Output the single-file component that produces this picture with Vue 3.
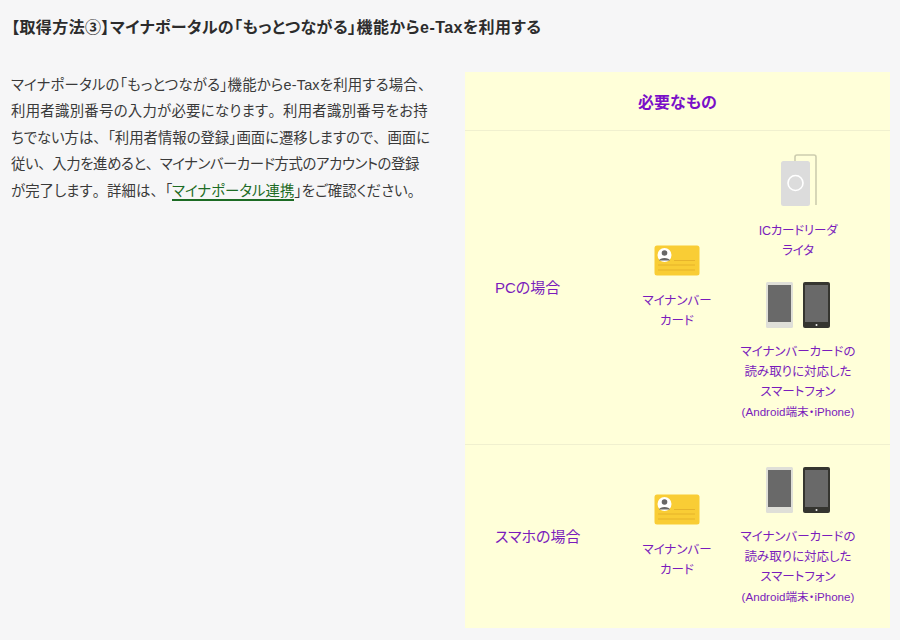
<script setup>
const phoneText = ['マイナンバーカードの', '読み取りに対応した', 'スマートフォン']
const rows = [
  { label: 'PCの場合', reader: true },
  { label: 'スマホの場合', reader: false },
]
</script>

<template>
  <main class="page">
    <h2 class="title">【取得方法③】マイナポータルの「もっとつながる」機能からe-Taxを利用する</h2>
    <div class="columns">
      <p class="lead">
        <span class="line l1">マイナポータルの「もっとつながる」機能からe-Taxを利用する場合<span class="p">、</span></span>
        <span class="line l2">利用者識別番号の入力が必要になります<span class="p">。</span>利用者識別番号をお持</span>
        <span class="line l3">ちでない方は<span class="p">、</span>「利用者情報の登録」画面に遷移しますので<span class="p">、</span>画面に</span>
        <span class="line l4">従い<span class="p">、</span>入力を進めると<span class="p">、</span>マイナンバーカード方式のアカウントの登録</span>
        <span class="line l5">が完了します<span class="p">。</span>詳細は<span class="p">、</span>「<a class="link" href="#">マイナポータル連携</a>」をご確認ください<span class="p">。</span></span>
      </p>
      <section class="panel">
        <h3 class="panel-title">必要なもの</h3>
        <div v-for="row in rows" :key="row.label" class="row">
          <div class="row-label">{{ row.label }}</div>
          <div class="card-col">
            <svg class="card-icon" viewBox="0 0 46 31" width="46" height="31">
              <rect x="0.5" y="0.5" width="45" height="30" rx="2.5" fill="#f9cd35" />
              <circle cx="10.5" cy="10" r="7" fill="#fff" />
              <circle cx="10.5" cy="8" r="2.8" fill="#666" />
              <path d="M5 15.5 C5.5 12 15.5 12 16 15.5 Z" fill="#666" />
              <path d="M20 15.5H41M4 20H41M4 25H41" stroke="#e6b32b" stroke-width="1" fill="none" />
            </svg>
            <div class="caption">マイナンバー<br>カード</div>
          </div>
          <div class="device-col">
            <template v-if="row.reader">
              <svg class="reader" viewBox="0 0 38 52" width="38" height="52">
                <path d="M15 8V3Q15 1 17 1H34Q36 1 36 3V51" fill="none" stroke="#cdcdae" stroke-width="1.6" />
                <rect x="1" y="7" width="29" height="45" rx="2.5" fill="#dcdcdc" />
                <circle cx="15.5" cy="29" r="7.5" fill="none" stroke="#fff" stroke-width="1.6" />
              </svg>
              <div class="caption reader-caption">ICカードリーダ<br>ライタ</div>
            </template>
            <div class="phones">
              <svg viewBox="0 0 27 46" width="27" height="46">
                <rect width="27" height="46" rx="1.5" fill="#dfdfd8" />
                <rect x="2" y="3" width="23" height="37" fill="#696969" />
              </svg>
              <svg viewBox="0 0 27 46" width="27" height="46">
                <rect width="27" height="46" rx="2" fill="#353530" />
                <rect x="2" y="3" width="23" height="37" fill="#696969" />
                <circle cx="13.5" cy="43" r="1" fill="#eee" />
              </svg>
            </div>
            <div class="caption phone-caption">
              <template v-for="line in phoneText" :key="line">{{ line }}<br></template>
              <span class="small">(Android端末・iPhone)</span>
            </div>
          </div>
        </div>
      </section>
    </div>
  </main>
</template>

<style scoped>
.page {
  width: 900px;
  height: 640px;
  box-sizing: border-box;
  padding: 18px 10px 0 11px;
  overflow: hidden;
  background: #f6f6f7;
  color: #333;
  font-family: "Liberation Sans", "Noto Sans CJK JP", sans-serif;
  font-feature-settings: "palt";
}
.title {
  margin: 0;
  font-size: 16px;
  line-height: 20px;
  font-weight: 700;
  letter-spacing: 0.42px;
  color: #2c2c2c;
}
.columns {
  display: flex;
  justify-content: space-between;
  align-items: flex-start;
  margin-top: 34px;
}
.lead {
  margin: 0;
  font-size: 14.4px;
  line-height: 26.4px;
  white-space: nowrap;
  color: #3a3a3a;
}
.line {
  display: block;
}
.p {
  font-feature-settings: normal;
}
.l1 { letter-spacing: 0.2px; }
.l2 { letter-spacing: 0.27px; }
.l3 { letter-spacing: -0.03px; }
.l4 { letter-spacing: -0.4px; }
.l5 { letter-spacing: 0.05px; }
.link {
  color: #1c6b24;
  text-decoration: none;
  border-bottom: 2px solid #1c6b24;
}
.panel {
  width: 425px;
  height: 556px;
  display: flex;
  flex-direction: column;
  background: #ffffd9;
  color: #7a1cbc;
}
.panel-title {
  margin: 0;
  height: 57px;
  padding-bottom: 1px;
  display: flex;
  align-items: center;
  justify-content: center;
  font-size: 16px;
  font-weight: 700;
  color: #7a0fc8;
  border-bottom: 1px solid #f0f0cf;
}
.row {
  display: grid;
  grid-template-columns: 140px 84px 158px;
  align-items: center;
  padding-left: 30px;
}
.row:nth-of-type(1) {
  height: 313px;
  border-bottom: 1px solid #f0f0cf;
}
.row:nth-of-type(2) {
  flex: 1;
}
.row-label {
  font-size: 15px;
  line-height: 20px;
}
.card-col,
.device-col {
  display: flex;
  flex-direction: column;
  align-items: center;
  text-align: center;
}
.card-icon {
  display: block;
}
.card-col .caption {
  margin-top: 16px;
  margin-bottom: -2px;
}
.caption {
  font-size: 12.5px;
  line-height: 19.6px;
  white-space: nowrap;
}
.small {
  font-size: 11.6px;
}
.reader {
  display: block;
  margin-left: 2px;
}
.reader-caption {
  margin-top: 16px;
  margin-bottom: 21px;
  letter-spacing: -0.2px;
}
.phones {
  display: flex;
  gap: 10px;
  margin-bottom: 15px;
}
.phone-caption {
  margin-bottom: -2px;
}
.phones svg {
  display: block;
}
</style>
